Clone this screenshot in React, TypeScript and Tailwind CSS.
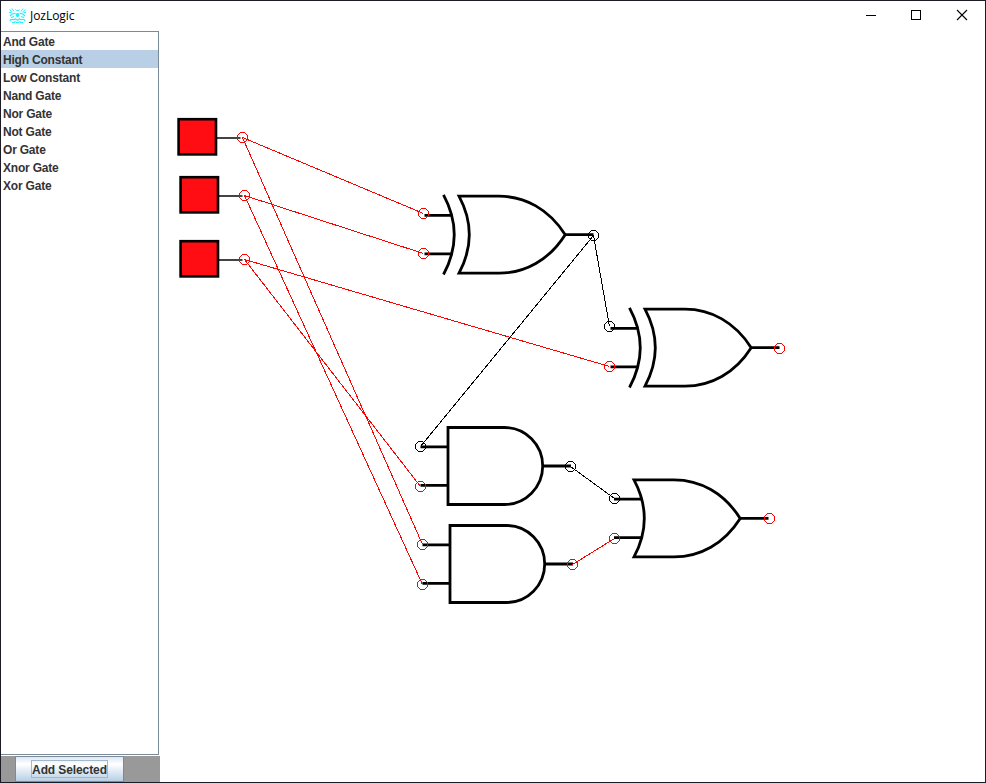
const parts = [
  "And Gate",
  "High Constant",
  "Low Constant",
  "Nand Gate",
  "Nor Gate",
  "Not Gate",
  "Or Gate",
  "Xnor Gate",
  "Xor Gate",
];

const RED = "#ff0000";
const BLACK = "#000000";

type Pt = [number, number];

const wires: { from: Pt; to: Pt; color: string }[] = [
  { from: [242, 137], to: [423, 213], color: RED },
  { from: [242, 137], to: [422, 544], color: RED },
  { from: [244, 195], to: [423, 253], color: RED },
  { from: [244, 195], to: [422, 584], color: RED },
  { from: [244, 259], to: [609, 366], color: RED },
  { from: [244, 259], to: [420, 486], color: RED },
  { from: [593, 235], to: [609, 326], color: BLACK },
  { from: [593, 235], to: [420, 446], color: BLACK },
  { from: [570, 466], to: [614, 498], color: BLACK },
  { from: [572, 564], to: [614, 538], color: RED },
];

const pins: { at: Pt; color: string }[] = [
  { at: [242, 137], color: RED },
  { at: [244, 195], color: RED },
  { at: [244, 259], color: RED },
  { at: [423, 213], color: RED },
  { at: [423, 253], color: RED },
  { at: [593, 235], color: BLACK },
  { at: [609, 326], color: BLACK },
  { at: [609, 366], color: RED },
  { at: [779, 348], color: RED },
  { at: [420, 446], color: BLACK },
  { at: [420, 486], color: RED },
  { at: [570, 466], color: BLACK },
  { at: [422, 544], color: RED },
  { at: [422, 584], color: RED },
  { at: [572, 564], color: RED },
  { at: [614, 498], color: BLACK },
  { at: [614, 538], color: RED },
  { at: [769, 518], color: RED },
];

// Aliased circle of radius 5, as runs of whole pixels around the pin's pixel.
const PIN_RING =
  "M-2 -5h5v1h-5zM-2 5h5v1h-5zM-5 -2h1v5h-1zM5 -2h1v5h-1z" +
  "M-3 -4h1v1h-1zM3 -4h1v1h-1zM-3 4h1v1h-1zM3 4h1v1h-1z" +
  "M-4 -3h1v1h-1zM4 -3h1v1h-1zM-4 3h1v1h-1zM4 3h1v1h-1z";

function HighConstant({ x, y }: { x: number; y: number }) {
  return (
    <g transform={`translate(${x} ${y})`}>
      <path d="M39 20H63" stroke="#444" strokeWidth="2" />
      <rect x="1.1" y="1.2" width="37.4" height="35.2" fill="#ff0d13" stroke="#000" strokeWidth="2.6" />
    </g>
  );
}

function OrShape({ x, y, exclusive = false }: { x: number; y: number; exclusive?: boolean }) {
  const leadEnd = exclusive ? -6.5 : 8.5;
  const leadStart = exclusive ? -34.5 : -20;
  return (
    <g transform={`translate(${x} ${y})`} fill="none" stroke="#000" strokeWidth="2.8">
      <path d="M0 0H40C66 0 90 13 106.2 38.5C90 64 66 77 40 77H0Q20.6 38.5 0 0Z" />
      {exclusive && <path d="M-15.5 -1.3Q6 38.5 -15.5 78.3" />}
      <path d={`M${leadStart} 19.2H${leadEnd}M${leadStart} 57.7H${leadEnd}M106.2 38.5H134.5`} />
    </g>
  );
}

function AndShape({ x, y }: { x: number; y: number }) {
  return (
    <g transform={`translate(${x} ${y})`} fill="none" stroke="#000" strokeWidth="2.8">
      <path d="M0 0H56.5A38.2 38.5 0 0 1 56.5 77H0Z" />
      <path d="M-27.5 19.3H0M-27.5 57.8H0M94.7 38.5H123" />
    </g>
  );
}

function AppIcon() {
  return (
    <svg width="17" height="16" viewBox="0 0 17 16" fill="none" stroke="#22f0f8" strokeWidth="1">
      <path d="M.5 1.5L3.5 4M3 .5L5 3.5M16.5 1.5L13.5 4M14 .5L12 3.5M0 4.5H2.5M14.5 4.5H17" />
      <path d="M6.5 1.5L7.5 2.5H9.5L10.5 1.5" />
      <path d="M1 8Q3.5 5 6.5 5.5M16 8Q13.5 5 10.5 5.5M2 9.5L5 8.5M15 9.5L12 8.5" strokeWidth="1.3" />
      <circle cx="8.5" cy="7" r="1.9" fill="#22f0f8" stroke="none" />
      <path
        d="M1 13Q1.5 10.8 3.5 11.5T6.3 10.8L8.5 12.3L10.7 10.8Q11.5 12.2 13.5 11.5T16 13M3 14.5H5.5L6.5 13M14 14.5H11.5L10.5 13M7 14.5H10"
        strokeWidth="1.2"
      />
    </svg>
  );
}

function TitleBar() {
  return (
    <header className="flex h-[30px] shrink-0 items-center bg-white pl-2">
      <AppIcon />
      <span className="ml-1 font-['Open_Sans',sans-serif] text-[12px] leading-4 tracking-[-0.05px] text-black">
        JozLogic
      </span>
      <svg className="ml-auto" width="138" height="30" fill="none" stroke="#000" shapeRendering="crispEdges">
        <path d="M19 14.5H29" />
        <rect x="64.5" y="9.5" width="9" height="9" />
        <path d="M110 9L120 19M120 9L110 19" shapeRendering="auto" strokeWidth="1.1" />
      </svg>
    </header>
  );
}

function Sidebar() {
  return (
    <aside className="flex w-[159px] shrink-0 flex-col bg-white font-['Liberation_Sans',Arial,sans-serif] text-[12px] font-bold text-[#333]">
      <ul className="w-[158px] flex-1 border-t border-r border-b border-[#7a8a99] tracking-[-0.2px]">
        {parts.map((part) => (
          <li
            key={part}
            className={
              part === "High Constant"
                ? "h-[18px] bg-[#b8cfe5] pl-[2px] leading-[21px]"
                : "h-[18px] pl-[2px] leading-[21px]"
            }
          >
            {part}
          </li>
        ))}
      </ul>
      <div className="mt-px flex h-[26px] w-[159px] shrink-0 bg-[#999] pl-[14px]">
        <button className="flex h-[26px] w-[109px] items-center justify-center border border-[#7a8a99] bg-linear-to-b from-[#dde8f3] via-white via-30% to-[#b8cfe5]">
          <span className="h-[18px] border border-[#a3b8cc] leading-[18px] tracking-[-0.1px] whitespace-nowrap">
            Add Selected
          </span>
        </button>
      </div>
    </aside>
  );
}

function Circuit() {
  return (
    <svg className="flex-1" viewBox="160 31 825 751" width="825" height="751">
      <HighConstant x={177.5} y={118} />
      <HighConstant x={179.5} y={176} />
      <HighConstant x={179.5} y={240} />
      <OrShape x={459} y={196.2} exclusive />
      <OrShape x={645} y={309.2} exclusive />
      <OrShape x={634} y={479.9} />
      <AndShape x={448} y={427.5} />
      <AndShape x={450} y={525.5} />
      <g strokeWidth="1" shapeRendering="crispEdges">
        {wires.map(({ from, to, color }, i) => (
          <path key={i} d={`M${from[0] + 0.5} ${from[1] + 0.5}L${to[0] + 0.5} ${to[1] + 0.5}`} stroke={color} />
        ))}
        {pins.map(({ at, color }, i) => (
          <path key={i} d={PIN_RING} transform={`translate(${at[0]} ${at[1]})`} fill={color} />
        ))}
      </g>
    </svg>
  );
}

export default function App() {
  return (
    <div className="flex h-[783px] w-[986px] flex-col overflow-hidden border border-[#1b1b25] bg-white">
      <TitleBar />
      <main className="flex min-h-0 flex-1">
        <Sidebar />
        <Circuit />
      </main>
    </div>
  );
}
